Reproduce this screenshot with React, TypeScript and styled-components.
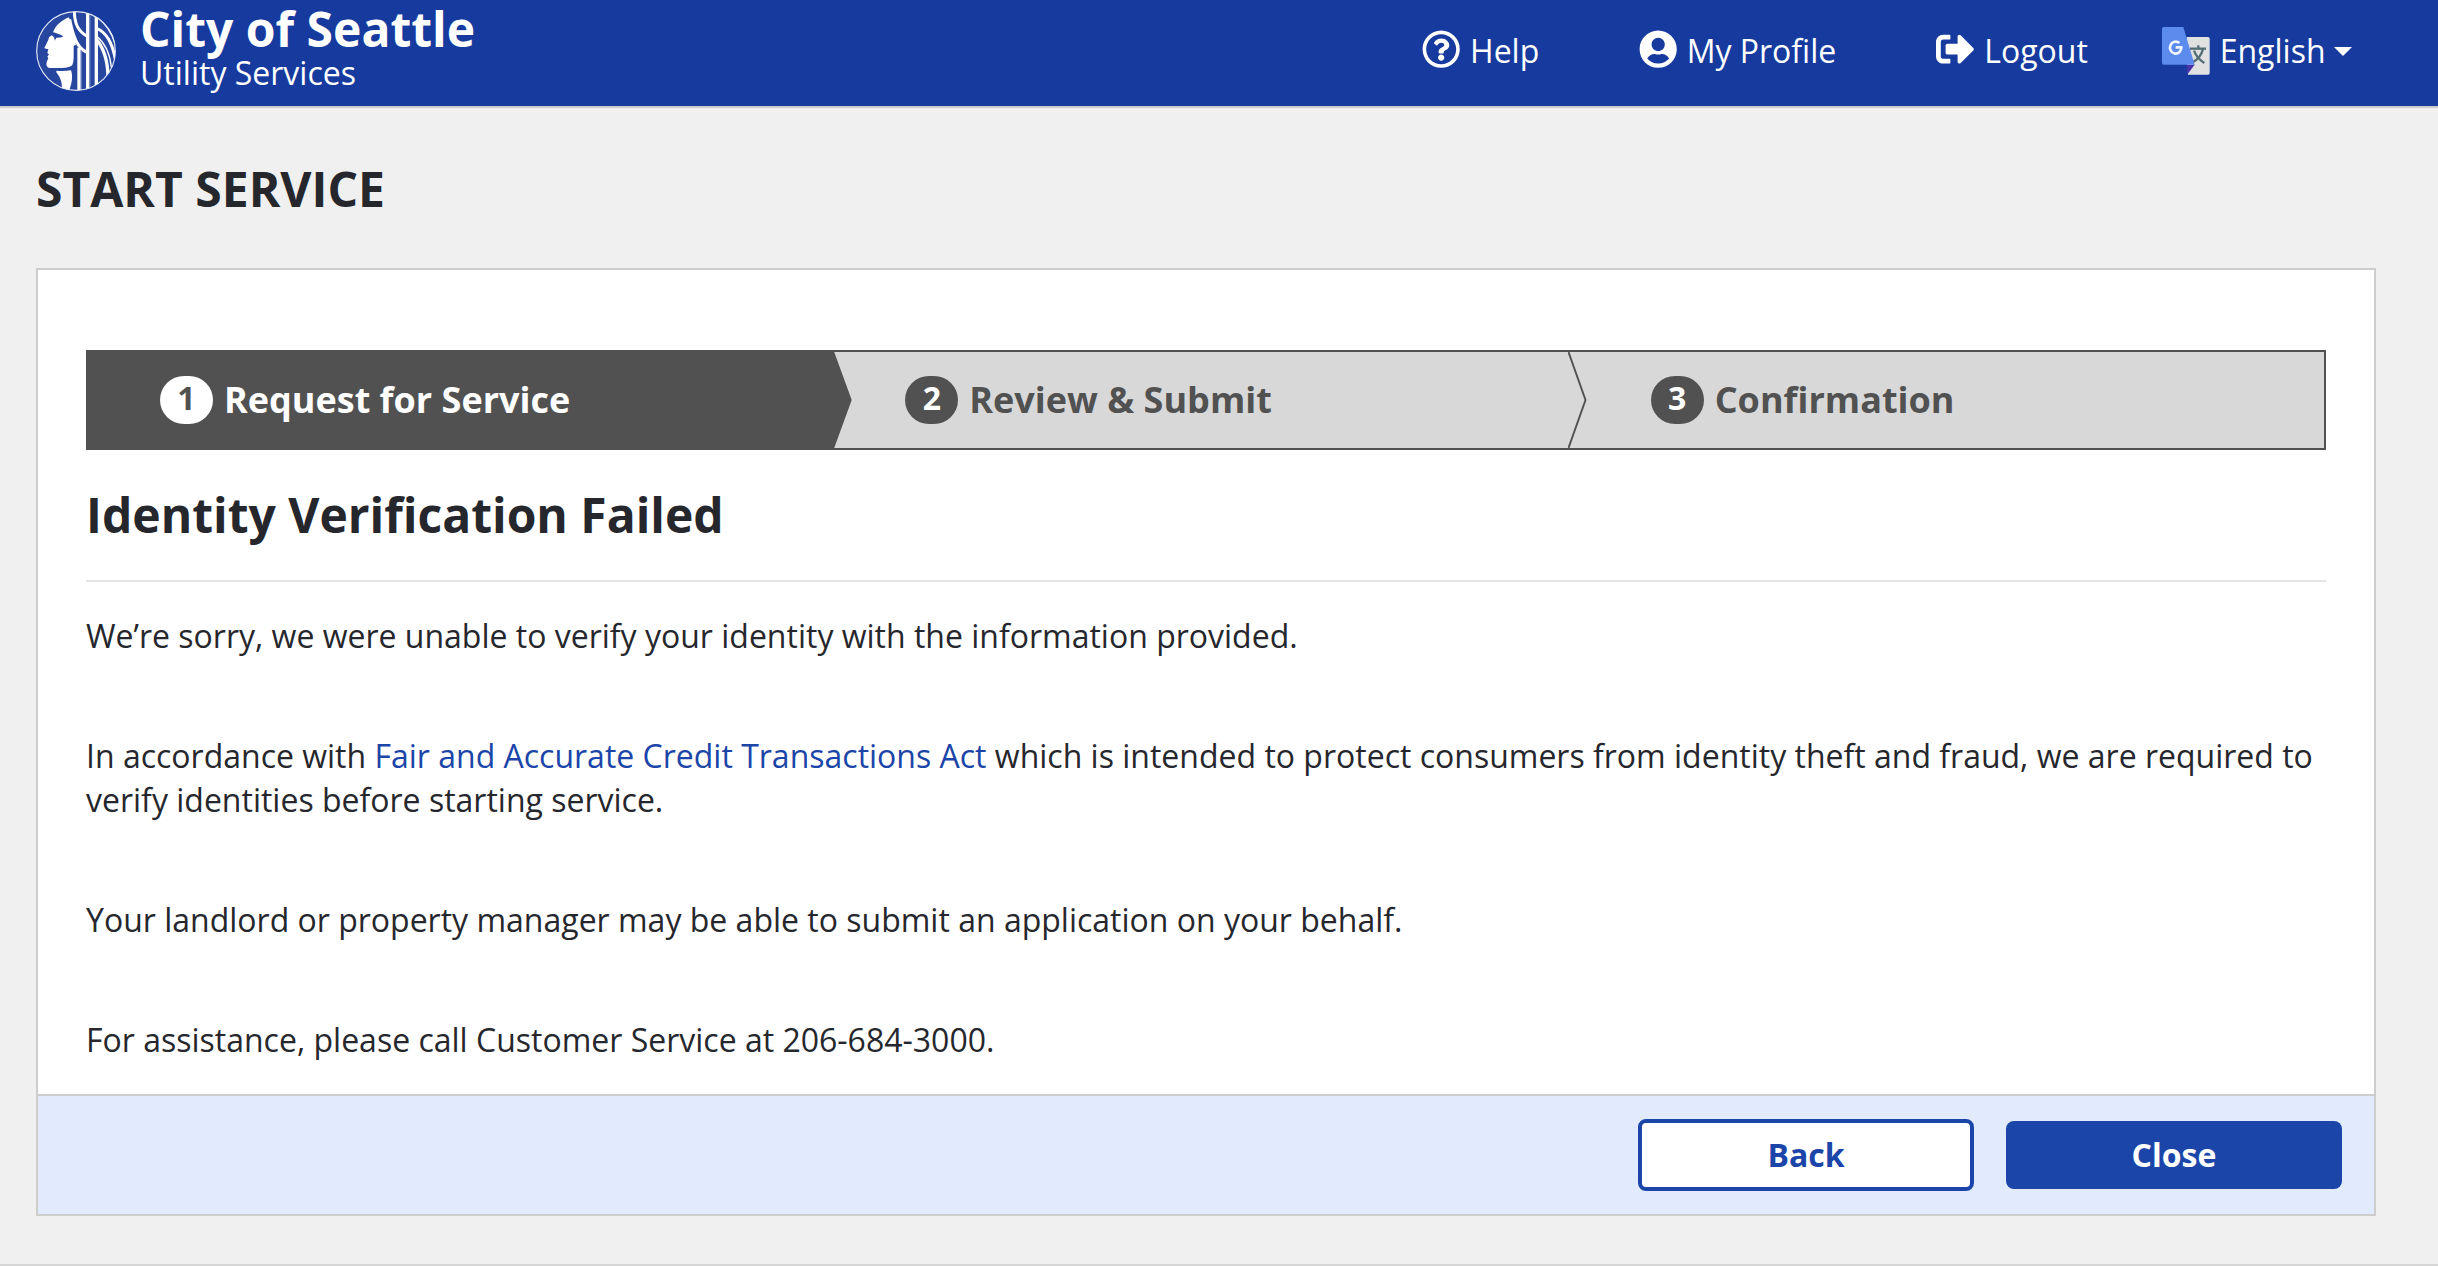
import React from "react";
import styled, { createGlobalStyle } from "styled-components";
import { FaRegQuestionCircle, FaSignOutAlt, FaUserCircle } from "react-icons/fa";

const color = {
  header: "#163a9e",
  primary: "#1b45a8",
  page: "#f0f0f0",
  text: "#26272d",
  border: "#cdcdcd",
  stepDark: "#515151",
  stepLight: "#d8d8d8",
  footer: "#e2ebfd",
};

const GlobalStyle = createGlobalStyle`
  *, *::before, *::after { box-sizing: border-box; }
  body {
    margin: 0;
    background: ${color.page};
    color: ${color.text};
    font-family: "Open Sans", "Noto Sans", sans-serif;
    font-size: 32px;
    line-height: 44px;
  }
`;

const Page = styled.div`
  display: flex;
  flex-direction: column;
  height: 1266px;
  border-bottom: 2px solid #d6d6d6;
`;

const Header = styled.header`
  display: flex;
  justify-content: space-between;
  flex: none;
  height: 108px;
  padding: 0 86.3px 0 36px;
  background: ${color.header};
  border-bottom: 2px solid #cbcbcb;
  color: #fff;
`;

const Brand = styled.div`
  display: flex;
  gap: 24px;
`;

const SealSvg = styled.svg`
  width: 80px;
  height: 80px;
  margin-top: 11px;
`;

const BrandText = styled.div`
  display: flex;
  flex-direction: column;
`;

const BrandName = styled.span`
  font-size: 48px;
  font-weight: 700;
  line-height: 57px;
`;

const BrandUnit = styled.span`
  line-height: 31px;
`;

const Nav = styled.nav`
  display: flex;
  align-items: flex-start;
  padding-top: 27px;
`;

const NavItem = styled.a<{ $before?: number }>`
  display: flex;
  align-items: flex-start;
  gap: 9.6px;
  height: 48px;
  margin-left: ${(p) => p.$before ?? 0}px;
  color: #fff;
  text-decoration: none;
  white-space: nowrap;
`;

const NavIcon = styled.span`
  display: flex;
  margin-top: 2.5px;
  font-size: 38.4px;
`;

const NavLabel = styled.span`
  display: flex;
  align-items: center;
  margin-top: 2px;
  line-height: 43px;
`;

const TranslateSvg = styled.svg`
  width: 48px;
  height: 48px;
`;

const Caret = styled.span`
  margin-left: 8.2px;
  margin-top: 2px;
  border-top: 9.6px solid #fff;
  border-left: 9.6px solid transparent;
  border-right: 9.6px solid transparent;
`;

const Main = styled.main`
  padding: 48px 62px 0 36px;
`;

const PageTitle = styled.h1`
  margin: 0 0 47px;
  font-size: 48px;
  font-weight: 700;
  line-height: 65px;
`;

const Card = styled.section`
  display: flex;
  flex-direction: column;
  height: 948px;
  background: #fff;
  border: 2px solid ${color.border};
`;

const CardBody = styled.div`
  flex: 1;
  padding: 80px 48px 0;
`;

const Steps = styled.ol`
  display: grid;
  grid-template-columns: repeat(3, 1fr);
  height: 100px;
  margin: 0;
  padding: 0;
  list-style: none;
  border: 2px solid ${color.stepDark};
  background: ${color.stepLight};
`;

const StepItem = styled.li<{ $active?: boolean }>`
  position: relative;
  display: flex;
  align-items: flex-start;
  gap: 11px;
  padding: 24px 0 0 72px;
  background: ${(p) => (p.$active ? color.stepDark : "transparent")};
  color: ${(p) => (p.$active ? "#fff" : color.stepDark)};
  font-size: 36px;
  font-weight: 700;
`;

const StepNumber = styled.span<{ $active?: boolean }>`
  width: 53px;
  height: 48px;
  border-radius: 24px;
  background: ${(p) => (p.$active ? "#fff" : color.stepDark)};
  color: ${(p) => (p.$active ? color.stepDark : "#fff")};
  font-size: 32px;
  line-height: 43px;
  text-align: center;
`;

const StepLabel = styled.span`
  margin-top: -1px;
  line-height: 49px;
`;

const Chevron = styled.svg<{ $offset: number }>`
  position: absolute;
  top: 0;
  right: ${(p) => p.$offset}px;
  width: 19px;
  height: 96px;
  z-index: 1;
`;

const Heading = styled.h2`
  margin: 32px 0 33px;
  font-size: 48px;
  font-weight: 700;
  line-height: 65px;
`;

const Rule = styled.hr`
  height: 2px;
  margin: 0 0 32px;
  border: 0;
  background: #e5e5e5;
`;

const Copy = styled.div`
  display: flex;
  flex-direction: column;
  gap: 76px;
`;

const Paragraph = styled.p`
  margin: 0;
`;

const Link = styled.a`
  color: ${color.primary};
  text-decoration: none;
`;

const CardFooter = styled.footer`
  display: flex;
  justify-content: flex-end;
  align-items: center;
  gap: 32px;
  height: 120px;
  padding: 0 32px;
  background: ${color.footer};
  border-top: 2px solid ${color.border};
`;

const Button = styled.button<{ $outline?: boolean }>`
  width: 336px;
  height: ${(p) => (p.$outline ? 72 : 68)}px;
  padding: 0 0 1px;
  border: ${(p) => (p.$outline ? `4px solid ${color.primary}` : "0")};
  border-radius: 8px;
  background: ${(p) => (p.$outline ? "#fff" : color.primary)};
  color: ${(p) => (p.$outline ? color.primary : "#fff")};
  font: 700 32px/43px "Open Sans", "Noto Sans", sans-serif;
`;

const Seal = () => (
  <SealSvg viewBox="48 33 240 240" aria-hidden="true">
    <defs>
      <clipPath id="seal-disc">
        <circle cx="168" cy="153" r="119" />
      </clipPath>
    </defs>
    <circle cx="168" cy="153" r="118" fill="#26469f" />
    <g clipPath="url(#seal-disc)">
      <path
        fill="#fff"
        d="M147 52C126 60 108 74 99 97C107 99 119 102 130 109C122 114 115 113 109 113L104 122C104 115 102 109 95 106L87 112C86 121 78 133 73 144C76 148 80 146 85 147L82 159L87 163L82 170L85 175C80 184 78 192 80 197C83 205 91 204 101 204C121 205 143 204 154 198C160 193 161 182 161 168V138L168 134C162 108 154 78 147 52Z"
      />
      <path fill="#fff" d="M109 212C121 213 139 213 153 211C158 224 158 243 148 270L126 267C126 249 123 235 109 217Z" />
      <g fill="none" stroke="#fff">
        <path strokeWidth="9" d="M163 34C164 72 173 91 201 109" />
        <path strokeWidth="9" d="M149 58C160 113 173 145 201 157" />
        <path strokeWidth="10" d="M177 143V276" />
        <path strokeWidth="10" d="M203 38V272" />
        <path strokeWidth="10" d="M229 46V262" />
        <path strokeWidth="9" d="M229 84C259 98 276 124 286 178" />
        <path strokeWidth="6" d="M234 52C260 72 275 95 286 130" />
        <path strokeWidth="10" d="M229 118C251 143 262 176 264 226" />
        <path strokeWidth="4" d="M230 108C258 132 270 160 274 202" />
      </g>
      <g fill="none" stroke="#8fa0d0" strokeWidth="2">
        <path d="M184 150V270" />
        <path d="M210 42V268" />
      </g>
    </g>
    <circle cx="168" cy="153" r="118" fill="none" stroke="#dfe5f3" strokeWidth="3.5" />
  </SealSvg>
);

const TranslateIcon = () => (
  <TranslateSvg viewBox="36 21 144 144" aria-hidden="true">
    <path fill="#e1e1e1" d="M110 51H174Q179 51 179 56V159Q179 164 174 164H114Z" />
    <g fill="none" stroke="#546e75" strokeWidth="7">
      <path d="M120 86H168" />
      <path d="M145 76V86" />
      <path d="M159 87C154 107 142 120 126 128" />
      <path d="M132 92C138 108 149 120 163 129" />
    </g>
    <path fill="#4932a8" d="M109 134H134L113 162Z" />
    <path fill="#5c8bee" d="M42 21H100L134 134H42Q36 134 36 128V27Q36 21 42 21Z" />
    <path fill="none" stroke="#f2f6ff" strokeWidth="8" d="M88 69A17 18 0 1 0 94 82H77" />
  </TranslateSvg>
);

const steps = ["Request for Service", "Review & Submit", "Confirmation"];

export default function App() {
  return (
    <>
      <GlobalStyle />
      <Page>
        <Header>
          <Brand>
            <Seal />
            <BrandText>
              <BrandName>City of Seattle</BrandName>
              <BrandUnit>Utility Services</BrandUnit>
            </BrandText>
          </Brand>
          <Nav>
            <NavItem>
              <NavIcon><FaRegQuestionCircle /></NavIcon>
              <NavLabel>Help</NavLabel>
            </NavItem>
            <NavItem $before={99.4}>
              <NavIcon><FaUserCircle /></NavIcon>
              <NavLabel>My Profile</NavLabel>
            </NavItem>
            <NavItem $before={100}>
              <NavIcon><FaSignOutAlt /></NavIcon>
              <NavLabel>Logout</NavLabel>
            </NavItem>
            <NavItem $before={74.3}>
              <TranslateIcon />
              <NavLabel>
                English
                <Caret />
              </NavLabel>
            </NavItem>
          </Nav>
        </Header>
        <Main>
          <PageTitle>START SERVICE</PageTitle>
          <Card>
            <CardBody>
              <Steps>
                {steps.map((label, i) => (
                  <StepItem key={label} $active={i === 0}>
                    <StepNumber $active={i === 0}>{i + 1}</StepNumber>
                    <StepLabel>{label}</StepLabel>
                    {i === 0 && (
                      <Chevron $offset={-18.9} viewBox="0 0 19 96">
                        <path d="M0 0H1.2L18.7 48L1.2 96H0Z" fill={color.stepDark} />
                      </Chevron>
                    )}
                    {i === 1 && (
                      <Chevron $offset={-8} viewBox="0 0 19 96">
                        <path d="M0.5 0L17.5 48L0.5 96" fill="none" stroke={color.stepDark} strokeWidth="1.9" />
                      </Chevron>
                    )}
                  </StepItem>
                ))}
              </Steps>
              <Heading>Identity Verification Failed</Heading>
              <Rule />
              <Copy>
                <Paragraph>
                  We’re sorry, we were unable to verify your identity with the information provided.
                </Paragraph>
                <Paragraph>
                  In accordance with <Link>Fair and Accurate Credit Transactions Act</Link> which is
                  intended to protect consumers from identity theft and fraud, we are required to
                  verify identities before starting service.
                </Paragraph>
                <Paragraph>
                  Your landlord or property manager may be able to submit an application on your behalf.
                </Paragraph>
                <Paragraph>For assistance, please call Customer Service at 206-684-3000.</Paragraph>
              </Copy>
            </CardBody>
            <CardFooter>
              <Button $outline>Back</Button>
              <Button>Close</Button>
            </CardFooter>
          </Card>
        </Main>
      </Page>
    </>
  );
}
